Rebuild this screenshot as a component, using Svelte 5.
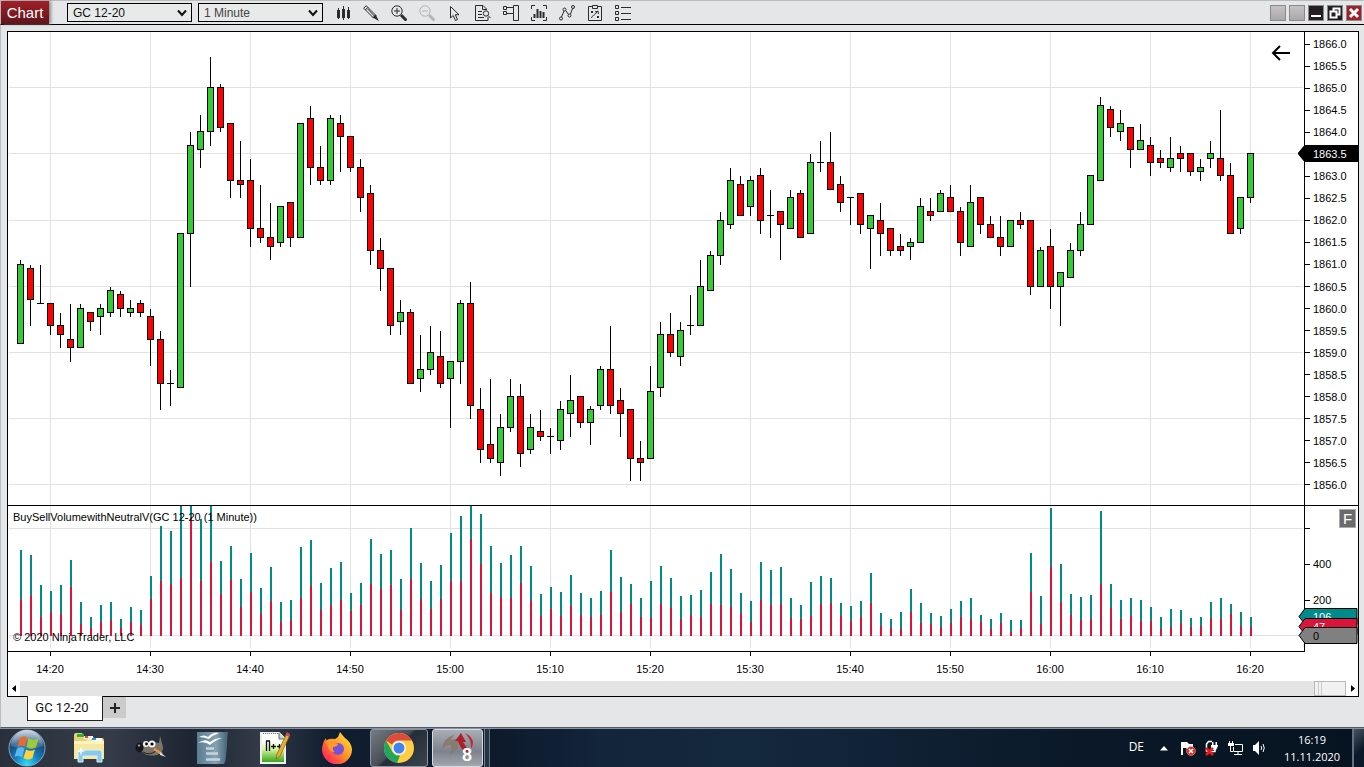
<script>
  // Candles: [high, body top, body bottom, low, kind], one per minute from 14:17.
  const candles = [
    [260,264,344,344,'g'],[265,268,300,326,'r'],[265,303,304,304,'d'],[303,303,326,335,'r'],[313,325,335,348,'r'],[304,339,348,362,'r'],
    [304,308,348,348,'g'],[312,312,322,331,'r'],[304,308,317,335,'g'],[287,290,313,317,'g'],[291,294,309,317,'r'],[300,308,313,317,'g'],
    [300,303,313,317,'r'],[309,316,340,366,'r'],[331,339,384,410,'r'],[370,383,384,406,'d'],[233,233,388,388,'g'],[132,145,234,287,'g'],
    [115,131,150,168,'g'],[57,87,132,146,'g'],[84,87,128,132,'r'],[123,123,181,198,'r'],[141,180,185,198,'r'],[159,180,229,247,'r'],
    [185,228,238,243,'r'],[203,237,247,260,'r'],[206,206,243,247,'g'],[202,202,238,247,'r'],[123,123,238,238,'g'],[106,118,168,185,'r'],
    [146,167,181,185,'r'],[115,118,181,185,'g'],[115,123,137,172,'r'],[136,136,168,172,'r'],[159,167,198,212,'r'],[185,193,251,265,'r'],
    [238,250,269,291,'r'],[268,268,326,335,'r'],[300,312,322,335,'g'],[309,312,384,384,'r'],[335,369,379,392,'g'],[326,352,370,375,'g'],
    [331,356,384,388,'r'],[361,361,379,428,'g'],[300,303,362,384,'g'],[282,303,406,419,'r'],[388,409,450,463,'r'],[379,444,459,463,'r'],
    [414,427,463,476,'g'],[379,396,428,432,'g'],[384,396,454,467,'r'],[414,427,450,454,'g'],[410,431,437,441,'r'],[428,436,437,454,'d'],
    [401,409,441,450,'g'],[375,400,414,437,'g'],[396,396,423,428,'r'],[406,409,423,445,'g'],[366,369,406,410,'g'],[326,369,406,414,'r'],
    [388,400,414,437,'r'],[409,409,459,481,'r'],[441,458,463,481,'r'],[366,391,459,459,'g'],[322,334,388,397,'g'],[313,334,353,357,'r'],
    [322,330,357,366,'g'],[295,325,326,335,'d'],[260,286,326,326,'g'],[251,255,291,291,'g'],[212,220,256,265,'g'],[168,180,225,229,'g'],
    [176,184,216,216,'r'],[176,180,207,216,'g'],[168,175,221,234,'r'],[190,215,216,238,'d'],[211,211,225,260,'r'],[190,197,229,229,'g'],
    [190,193,238,238,'r'],[154,162,234,234,'g'],[141,162,163,172,'d'],[132,162,190,190,'r'],[176,184,203,212,'r'],[197,197,198,225,'d'],
    [193,193,225,234,'r'],[215,215,229,269,'g'],[203,220,234,256,'r'],[228,228,251,256,'r'],[234,246,251,256,'r'],[238,242,247,260,'g'],
    [198,206,243,243,'g'],[198,211,216,221,'r'],[190,193,212,212,'g'],[185,197,212,212,'r'],[207,211,243,256,'r'],[185,202,247,247,'g'],
    [197,197,225,234,'r'],[216,224,238,238,'r'],[216,237,247,256,'r'],[220,220,247,247,'g'],[212,220,225,229,'r'],[220,220,287,295,'r'],
    [247,250,287,287,'g'],[229,246,287,309,'r'],[272,272,287,326,'g'],[243,250,278,278,'g'],[212,224,251,256,'g'],[175,175,225,225,'g'],
    [97,105,181,181,'g'],[106,109,128,137,'r'],[110,123,132,141,'g'],[127,127,150,168,'r'],[124,140,150,150,'g'],[137,145,163,176,'r'],
    [150,158,163,168,'r'],[137,158,168,172,'g'],[146,153,159,172,'r'],[153,153,172,176,'r'],[159,167,172,181,'g'],[141,153,159,168,'g'],
    [110,158,176,181,'r'],[163,175,234,234,'r'],[197,197,229,234,'g'],[153,153,198,203,'g']
  ];

  // Volume bars: [top of the buy part, top of the sell part].
  const volumes = [
    [50,100],[55,96],[85,117],[91,112],[85,114],[60,87],[102,124],[117,128],[105,122],[102,120],[119,128],[107,122],[110,125],[76,99],
    [26,81],[31,84],[6,78],[6,18],[19,81],[6,62],[61,94],[46,80],[79,107],[53,92],[88,114],[67,101],[102,122],[100,120],[47,98],[40,86],
    [83,110],[68,105],[62,100],[93,111],[83,105],[39,84],[54,89],[50,85],[79,110],[28,79],[63,99],[81,109],[65,99],[33,81],[16,81],[6,39],
    [14,64],[46,93],[63,97],[55,98],[46,83],[66,101],[94,116],[87,109],[92,116],[75,106],[93,115],[98,117],[91,115],[50,92],[77,112],[84,104],
    [98,117],[81,118],[66,104],[78,108],[96,119],[95,115],[90,117],[72,104],[54,105],[69,107],[93,113],[101,122],[62,100],[70,105],[67,104],
    [98,118],[105,119],[82,116],[76,104],[78,103],[103,116],[106,121],[101,117],[73,103],[113,126],[119,128],[112,129],[89,112],[103,123],
    [113,124],[116,127],[109,123],[101,117],[98,119],[115,122],[119,129],[113,123],[120,132],[120,128],[53,92],[96,124],[8,67],[64,102],
    [94,115],[97,120],[95,119],[11,84],[84,108],[100,119],[98,116],[100,121],[107,121],[117,129],[109,127],[110,123],[118,127],[117,126],
    [102,118],[98,119],[104,114],[112,126],[117,127]
  ];

  const fill = { g: '#33cc33', r: '#ff0000', d: '#000' };
  const prices = Array.from({ length: 21 }, (_, i) => (1866 - i * 0.5).toFixed(1));
  const times = ['14:20','14:30','14:40','14:50','15:00','15:10','15:20','15:30','15:40','15:50','16:00','16:10','16:20'];
  const columns = times.map((_, i) => 42 + i * 100);
  const barX = (i) => 12 + i * 10;
</script>

<div class="app">
  <header class="toolbar">
    <h1>Chart</h1>
    <div class="picks">
      <label class="pick">
        <select aria-label="Instrument"><option>GC 12-20</option></select>
        <svg width="10" height="8" viewBox="0 0 10 8"><path d="M1 1.5L5 6L9 1.5" /></svg>
      </label>
      <label class="pick muted">
        <select aria-label="Interval"><option>1 Minute</option></select>
        <svg width="10" height="8" viewBox="0 0 10 8"><path d="M1 1.5L5 6L9 1.5" /></svg>
      </label>
    </div>
    <nav class="tools">
      <button aria-label="Chart style">
        <svg viewBox="0 0 16 16"><path d="M3.500 3V14M8.500 1V15M13.500 2V14" /><path class="solid" d="M2 5h3v8H2zM7 4h3v9H7zM12 5h3v8h-3z" /></svg>
      </button>
      <button aria-label="Drawing tools">
        <svg viewBox="0 0 16 16"><path d="M.700 3.200L3.200 .700L13 10.500L10.500 13ZM2.300 5L5 2.300M4.500 3.800L11.800 11.500" /><path class="solid" d="M9.500 12.500L12.500 9.500L16 16Z" /></svg>
      </button>
      <button aria-label="Zoom in">
        <svg viewBox="0 0 16 16"><circle cx="6" cy="6" r="5.200" /><path d="M6 3V9M3 6H9" /><path class="thick" d="M10 10L15.500 15.500" /></svg>
      </button>
      <button aria-label="Zoom out" class="off">
        <svg viewBox="0 0 16 16"><circle cx="6" cy="6" r="5.200" /><path d="M3 6H9" /><path class="thick" d="M10 10L15.500 15.500" /></svg>
      </button>
      <button aria-label="Cursor">
        <svg viewBox="0 0 16 16"><path d="M3.500 1.500V13L6.200 10.500L8.500 15.500L10.500 14.500L8.300 9.700H12Z" /></svg>
      </button>
      <button aria-label="Data box">
        <svg viewBox="0 0 16 16"><path d="M10.500 15.500H.500V.500H8L11.500 4V5M7.500 .500V4.500H11M3 6.500H7M3 9.500H7M3 12.500H9M13 12V15.500H10" /><circle cx="11" cy="8.500" r="2.700" /><path d="M13 10.500L15.500 13" /></svg>
      </button>
      <button aria-label="Chart trader">
        <svg viewBox="0 0 16 16"><path d="M.500 1.500H3.500V4.500H.500ZM.500 6.500H3.500V9.500H.500ZM4 2.500H10M4 8.500H10M10.500 .500H15.500V15.500H10.500Z" /></svg>
      </button>
      <button aria-label="Data series">
        <svg viewBox="0 0 16 16"><path d="M4 .500H.500V4M12 .500H15.500V4M.500 12V15.500H4M15.500 12V15.500H12" /><path class="solid" d="M2.500 9h2v4h-2zM5.500 4h2v9h-2zM8.500 6h2v7h-2zM11.500 7h2v6h-2z" /></svg>
      </button>
      <button aria-label="Indicators">
        <svg viewBox="0 0 16 16"><path d="M2.500 12L5 6M7 6L9.500 9.500M11.500 9L13.500 3.500" /><circle cx="2" cy="13.500" r="1.500" /><circle cx="5.500" cy="4.500" r="1.500" /><circle cx="10.500" cy="10.500" r="1.500" /><circle cx="14" cy="2" r="1.500" /></svg>
      </button>
      <button aria-label="Strategies">
        <svg viewBox="0 0 16 16"><path d="M5 1.500H1.500V15.500H14.500V1.500H11M5.500 .500H10.500V3.500H5.500ZM4 6L6 8M6 6L4 8M10 11L12 13M12 11L10 13M4.500 13C5 10 8 11 10 6.500M8 7L11 6L11.500 9" /></svg>
      </button>
      <button aria-label="Properties">
        <svg viewBox="0 0 16 16"><path d="M.500 .500H3.500V3.500H.500ZM.500 6.500H3.500V9.500H.500ZM.500 12.500H3.500V15.500H.500ZM6 2.500H16M6 8.500H16M6 14.500H16" /></svg>
      </button>
    </nav>
    <div class="window-buttons">
      <button aria-label="Link instrument"></button>
      <button aria-label="Link interval"></button>
      <button class="dark" aria-label="Minimize"><svg viewBox="0 0 14 14"><path d="M2 10H12" stroke-width="2" /></svg></button>
      <button class="dark" aria-label="Restore"><svg viewBox="0 0 14 14"><path d="M5.500 5V2.500H11.500V8.500H9M2.500 5.500H8.500V11.500H2.500Z" stroke-width="2" /></svg></button>
      <button class="close" aria-label="Close"><svg viewBox="0 0 14 14"><path d="M3 3L11 11M11 3L3 11" stroke-width="3" /></svg></button>
    </div>
  </header>

  <main>
    <section class="frame">
      <div class="pane price">
        <div class="plot">
          <svg viewBox="0 0 1296 473" preserveAspectRatio="none" shape-rendering="crispEdges">
            {#each [87, 153, 220, 286, 352, 418, 484] as y}
              <rect x="1" y={y - 32} width="1294" height="1" fill="#e2e2e2" />
            {/each}
            {#each columns as x}
              <rect {x} y="0" width="1" height="473" fill="#e2e2e2" />
            {/each}
            {#each candles as [high, top, bottom, low, kind], i}
              <rect x={barX(i)} y={high - 32} width="1" height={low - high} />
              <rect x={barX(i) - 3} y={top - 32} width="7" height={bottom - top} />
              {#if kind !== 'd'}
                <rect x={barX(i) - 2} y={top - 31} width="5" height={bottom - top - 2} fill={fill[kind]} />
              {/if}
            {/each}
          </svg>
          <button class="back" aria-label="Scroll to last bar">
            <svg width="20" height="16" viewBox="0 0 20 16"><path d="M19 8H2.500M9 1L2 8L9 15" fill="none" stroke="#000" stroke-width="2" /></svg>
          </button>
        </div>
        <ol class="scale">
          {#each prices as p}<li>{p}</li>{/each}
        </ol>
        <div class="marker last"><svg viewBox="0 0 60 17" preserveAspectRatio="none"><path d="M0 8.500L7 0H60V17H7Z" /></svg><span>1863.5</span></div>
      </div>

      <div class="pane volume">
        <div class="plot">
          <svg viewBox="0 0 1296 145" preserveAspectRatio="none" shape-rendering="crispEdges">
            <rect x="1" y="22" width="1294" height="1" fill="#e2e2e2" />
            <rect x="1" y="129" width="1294" height="1" fill="#e2e2e2" />
            {#each columns as x}
              <rect {x} y="0" width="1" height="142" fill="#e2e2e2" />
            {/each}
            {#each volumes as [buy, sell], i}
              <rect x={barX(i)} y={buy - 6} width="2" height={sell - buy} fill="#008b8b" />
              <rect x={barX(i)} y={sell - 6} width="2" height={136 - sell} fill="#dc143c" />
            {/each}
          </svg>
          <p class="caption">BuySellVolumewithNeutralV(GC 12-20 (1 Minute))</p>
          <p class="copyright">© 2020 NinjaTrader, LLC</p>
        </div>
        <ol class="scale">
          <li></li><li>400</li><li>200</li>
        </ol>
        <button class="fixed">F</button>
        <div class="marker buy"><svg viewBox="0 0 60 17" preserveAspectRatio="none"><path d="M1 8.500L7 .500H59V16.500H7Z" /></svg><span>106</span></div>
        <div class="marker sell"><svg viewBox="0 0 60 17" preserveAspectRatio="none"><path d="M1 8.500L7 .500H59V16.500H7Z" /></svg><span>47</span></div>
        <div class="marker neutral"><svg viewBox="0 0 60 17" preserveAspectRatio="none"><path d="M1 8.500L7 .500H59V16.500H7Z" /></svg><span>0</span></div>
      </div>

      <ol class="times">
        {#each times as t}<li>{t}</li>{/each}
      </ol>

      <div class="scrollbar">
        <button aria-label="Scroll left"><svg width="5" height="7" viewBox="0 0 5 7"><path d="M4 0V7L0 3.500Z" /></svg></button>
        <span class="track"><i class="thumb"></i></span>
        <button aria-label="Scroll right"><svg width="5" height="7" viewBox="0 0 5 7"><path d="M1 0V7L5 3.500Z" /></svg></button>
      </div>
    </section>

    <nav class="tabs">
      <button class="tab">GC 12-20</button>
      <button class="add" aria-label="Add tab"><svg width="10" height="10" viewBox="0 0 10 10"><path d="M5 0V10M0 5H10" stroke="#222" stroke-width="2" /></svg></button>
    </nav>
  </main>

  <footer class="taskbar">
    <button class="start" aria-label="Start">
      <svg width="38" height="38" viewBox="0 0 38 38">
        <defs>
          <radialGradient id="orb" cx=".5" cy=".95" r=".95"><stop offset="0" stop-color="#2fe0ff" /><stop offset=".35" stop-color="#1583c0" /><stop offset=".7" stop-color="#174a78" /><stop offset="1" stop-color="#7f9eb8" /></radialGradient>
          <linearGradient id="gloss" x2="0" y2="1"><stop offset="0" stop-color="#fff" stop-opacity=".6" /><stop offset="1" stop-color="#fff" stop-opacity=".1" /></linearGradient>
        </defs>
        <circle cx="19" cy="19" r="18" fill="url(#orb)" stroke="#9db9cc" stroke-opacity=".8" />
        <path d="M3 17A16 16 0 0 1 35 17Q19 23 3 17Z" fill="url(#gloss)" />
        <path d="M12 9Q16 6 19 8.500L17 17.500Q13 15.500 9.500 18Z" fill="#ed6a2d" />
        <path d="M20.500 9Q25 12 30.500 9.500L28 18.500Q23 21 18.500 18Z" fill="#9acb3c" />
        <path d="M9 19.500Q13 17 16.500 19.500L14 28.500Q10 26 6.500 28Z" fill="#5cb6f0" />
        <path d="M18 20.500Q22 23 27 20.500L24.500 29Q20 32 15.500 29Z" fill="#ffd23e" />
      </svg>
    </button>
    <button class="task" aria-label="Explorer">
      <svg width="34" height="32" viewBox="0 0 34 32">
        <path d="M2 27V3Q2 1 4 1H10L12 4H20L22 6H30Q32 6 32 9V27Z" fill="#e8cf77" />
        <path d="M5 2h7v3H5z" fill="#23b53b" /><path d="M12 4h9v3h-9z" fill="#f4f4ee" /><path d="M13 4h3v2h-3z" fill="#e0462c" /><path d="M20 6h10v3H20z" fill="#fff" /><path d="M20 6h4v2h-4z" fill="#2d92dd" />
        <path d="M2 9H14L16 7H19L20 9H32V27H2Z" fill="#f8e79f" /><path d="M2 9H32V12H2Z" fill="#fff4bd" />
        <path d="M6 30V21Q6 18 9 18H27Q30 18 30 21V30H25V24H11V30Z" fill="#8cc9e8" stroke="#d7f1fd" />
        <path d="M9 14L10 18L14 19L10 20L9 24L8 20L4 19L8 18Z" fill="#fff" opacity=".8" />
      </svg>
    </button>
    <button class="task" aria-label="GIMP">
      <svg width="32" height="26" viewBox="0 0 32 26">
        <path d="M4 11Q8 8 10 9Q17 6 24 8L25 1L28 12Q29 17 22 20Q12 22 7 17Z" fill="#7b7468" />
        <ellipse cx="4.500" cy="12.500" rx="4" ry="5" fill="#181818" /><ellipse cx="4" cy="10.500" rx="1.200" ry="1" fill="#aaa" />
        <circle cx="11" cy="9" r="3" fill="#f5f5f5" /><circle cx="17" cy="9" r="3.500" fill="#f5f5f5" /><circle cx="11.500" cy="9" r="1.400" /><circle cx="17" cy="9" r="1.600" />
        <path d="M8 17Q14 21 21 16" fill="none" stroke="#222" /><path d="M19 14L27 19" stroke="#e69a45" stroke-width="2.500" /><path d="M25 17L31 22L25 20Z" fill="#ddd" />
      </svg>
    </button>
    <button class="task" aria-label="OpenOffice">
      <svg width="34" height="34" viewBox="0 0 34 34">
        <defs><linearGradient id="doc"><stop offset="0" stop-color="#5b7c92" /><stop offset=".6" stop-color="#86a2b3" /><stop offset="1" stop-color="#426176" /></linearGradient></defs>
        <path d="M1 1H32Q31 8 31 15L30 25Q30 30 28 33H1Z" fill="url(#doc)" />
        <path d="M3 6Q8 3 12 6Q17 1 23 2Q17 4 13 8Q8 6 3 6ZM2 12Q9 7 14 11Q19 7 26 7Q18 10 14 14Q9 10 2 12Z" fill="#fff" />
        <path d="M10 17.500H18M10 22.500H22M10 28.500H24" stroke="#c5d4dd" stroke-width="2.500" />
      </svg>
    </button>
    <button class="task" aria-label="Notepad++">
      <svg width="32" height="34" viewBox="0 0 32 34">
        <defs><linearGradient id="page" x2="0" y2="1"><stop offset=".3" stop-color="#fff" /><stop offset=".55" stop-color="#d2f29c" /><stop offset="1" stop-color="#2f9f0e" /></linearGradient></defs>
        <path d="M2 2H20L26 8V32H2Z" fill="url(#page)" stroke="#eee" stroke-width="2" /><path d="M20 2V8H26" fill="#ccc" stroke="#666" />
        <path d="M4 2.500H20" stroke="#777" stroke-dasharray="1 1" /><path d="M7.500 20V10H10.500V20M12 15.500H17M14.500 13V18M18 15.500H23M20.500 13V18" fill="none" stroke="#111" stroke-width="1.300" />
        <path d="M28 2L31 4L21 25L17 28L18 23Z" fill="#e9b22e" stroke="#8a5a19" stroke-width=".7" /><path d="M28 1L31 3L30 6L26.500 4Z" fill="#c0524d" />
      </svg>
    </button>
    <button class="task" aria-label="Firefox">
      <svg width="32" height="32" viewBox="0 0 32 32">
        <defs><linearGradient id="fox" x1="1" x2="0" y2="1"><stop offset="0" stop-color="#fff14b" /><stop offset=".45" stop-color="#ff9824" /><stop offset=".8" stop-color="#ff3750" /><stop offset="1" stop-color="#d81a79" /></linearGradient></defs>
        <path d="M19 0Q22 4 24 6Q30 10 31 17A15 15 0 1 1 2 12Q3 8 5 6Q5 9 7 9Q9 6 14 7L17 5Z" fill="url(#fox)" />
        <circle cx="17" cy="17" r="6" fill="#7750dc" /><path d="M5 9Q9 5 14 8L13 11Q17 11 17 13Q15 15 12 15Q11 18 14 20Q8 20 7 15Z" fill="#ff9a28" />
      </svg>
    </button>
    <button class="task running" aria-label="Chrome">
      <svg width="32" height="32" viewBox="0 0 32 32">
        <circle cx="16" cy="16" r="15" fill="#ffcd41" />
        <path d="M16 1A15 15 0 0 1 29 8.500H16A7.500 7.500 0 0 0 9 12.500L3 8.500A15 15 0 0 1 16 1Z" fill="#dd4b3e" />
        <path d="M3 8.500L9.500 20A7.500 7.500 0 0 0 17 23.500L14 31A15 15 0 0 1 3 8.500Z" fill="#22a55d" />
        <circle cx="16" cy="16" r="7" fill="#f6f6f6" /><circle cx="16" cy="16" r="5.500" fill="#4284ed" />
      </svg>
    </button>
    <button class="task running active" aria-label="NinjaTrader 8">
      <svg width="34" height="34" viewBox="0 0 34 34">
        <path d="M1 18Q2 7 13 4L9 10Q14 6 18 10L17 17L9 24Q12 16 9 14Q5 14 1 18Z" fill="#897b71" />
        <path d="M14 10L20 2L25 11H22L29 22Q22 21 19 15L17 10Z" fill="#ae2028" />
        <path d="M24 2Q36 8 30 18Q31 9 24 2Z" fill="#c0282f" />
        <text x="21" y="30" font-size="18" font-weight="bold" fill="#fff">8</text>
      </svg>
    </button>
    <span class="stack"></span>
    <div class="tray">
      <span class="lang">DE</span>
      <button aria-label="Show hidden icons"><svg width="8" height="5" viewBox="0 0 8 5"><path d="M0 4.500L4 0L8 4.500Z" fill="#fff" /></svg></button>
      <button aria-label="Action center"><svg width="16" height="16" viewBox="0 0 16 16"><path d="M2 15V2" stroke="#fff" stroke-width="2" /><path d="M3 2H7L9 4H13V10H8L6 8H3Z" fill="#fff" /><circle cx="11" cy="11" r="4.500" fill="#d92f24" stroke="#f2a097" stroke-width=".5" /><path d="M9 9L13 13M13 9L9 13" stroke="#fff" stroke-width="1.500" /></svg></button>
      <button aria-label="Power"><svg width="16" height="16" viewBox="0 0 16 16"><path d="M5 11H2.500V4L4.500 1.500H8M11 9V11.500H7" fill="none" stroke="#fff" stroke-width="1.500" /><path d="M7 5H14V6L12 10H9L7 8ZM8 2h1.500v3H8zM11.500 2H13v3h-1.500z" fill="#fff" /><path d="M2 8L9 15M9 8L2 15" stroke="#f01818" stroke-width="2.500" /></svg></button>
      <button aria-label="Network"><svg width="16" height="16" viewBox="0 0 16 16"><path d="M7 4.500H14.500V11.500H5.500V7M6 14.500H14M10 12V14M2.500 6V11.500H5M1.500 1V4M4.500 1V4" fill="none" stroke="#fff" /><path d="M0 3h6v3H0z" fill="#fff" /></svg></button>
      <button aria-label="Volume"><svg width="16" height="16" viewBox="0 0 16 16"><path d="M1 5H3L7 1V15L3 11H1Z" fill="#fff" /><path d="M9 6Q10.500 8 9 10M11 4Q13.500 8 11 12" fill="none" stroke="#fff" /></svg></button>
      <time class="clock"><span>16:19</span><span>11.11.2020</span></time>
      <button class="desktop" aria-label="Show desktop"></button>
    </div>
  </footer>
</div>

<style>
  :global(body) { background: #e5e6e8; }
  .app { min-height: 100vh; display: flex; flex-direction: column; box-sizing: border-box; font: 11px/14px "Liberation Sans", Arial, sans-serif; color: #000; }
  button { border: 0; padding: 0; margin: 0; background: none; font: inherit; color: inherit; display: flex; align-items: center; justify-content: center; box-sizing: border-box; }
  ol { list-style: none; margin: 0; padding: 0; }
  h1, p { margin: 0; }

  .toolbar { height: 25px; box-sizing: border-box; border-top: 1px solid #bcbcbe; border-bottom: 1px solid #000; border-left: 1px solid #bcbcbe; display: flex; align-items: center; background: #e5e6e8; }
  h1 { width: 48px; height: 23px; font-size: 15px; line-height: 23px; font-weight: 400; text-align: center; color: #fff; background: linear-gradient(#a01f28, #5f151b); box-shadow: 2px 0 3px #888; }
  .picks { display: flex; gap: 6px; margin: 0 6px 0 18px; }
  .pick { display: flex; position: relative; }
  .pick select { appearance: none; width: 125px; height: 19px; border: 1px solid #000; border-radius: 0; background: #e8e9e9; padding: 1px 5px 0; font: 12px/16px "Liberation Sans", Arial, sans-serif; color: #111; }
  .pick.muted select { color: #444; }
  .pick svg { position: absolute; right: 5px; top: 6px; fill: none; stroke: #111; stroke-width: 2; pointer-events: none; }
  .tools { display: flex; flex: 1; }
  .tools button { width: 28px; height: 20px; }
  .tools svg { width: 16px; height: 16px; fill: none; stroke: #2b2b2d; stroke-width: 1; }
  .tools .solid { fill: #2b2b2d; stroke: none; }
  .tools .thick { stroke-width: 3; }
  .tools .off svg { stroke: #b4b4b6; }
  .window-buttons { display: flex; gap: 3px; margin-right: 2px; }
  .window-buttons button { width: 16px; height: 16px; border: 1px solid #8a8a8a; background: linear-gradient(#c4c2c3, #aaa8a9); }
  .window-buttons .dark { background: #231f20; }
  .window-buttons .close { background: #a01f28; }
  .window-buttons svg { width: 14px; height: 14px; flex: none; fill: none; stroke: #fff; }

  main { flex: 1; display: flex; flex-direction: column; padding: 6px 5px 0 6px; border-left: 1px solid #bcbcbe; border-bottom: 1px solid #55585e; }
  .frame { flex: 1; display: flex; flex-direction: column; border: 1px solid #000; background: #fff; }
  .pane { display: flex; position: relative; }
  .pane.price { flex: 1; border-bottom: 1px solid #000; }
  .pane.volume { height: 145px; }
  .plot { flex: 1; position: relative; min-height: 0; }
  .plot > svg { position: absolute; inset: 0; width: 100%; height: 100%; }
  .back { position: absolute; right: 13px; top: 13px; }
  .scale { width: 53px; border-left: 1px solid #000; display: flex; flex-direction: column; padding-top: 1px; padding-bottom: 9px; }
  .scale li { flex: 1 1 14px; display: flex; align-items: center; gap: 3px; }
  .scale li::before { content: ""; width: 5px; height: 1px; background: #000; }
  .volume .scale { padding-top: 4px; padding-bottom: 33px; }
  .caption, .copyright { position: absolute; left: 5px; }
  .caption { top: 4px; }
  .copyright { bottom: 7px; }
  .marker { position: absolute; right: 0; width: 60px; height: 17px; }
  .marker svg { position: absolute; width: 100%; height: 100%; stroke: #000; }
  .marker span { position: absolute; left: 15px; top: 2px; color: #fff; }
  .last { top: 113px; }
  .buy { bottom: 26px; fill: #008b8b; }
  .sell { bottom: 16px; fill: #dc143c; }
  .neutral { bottom: 7px; fill: #808080; }
  .neutral span { color: #000; }
  .fixed { position: absolute; right: 2px; top: 3px; width: 17px; height: 19px; border: 1px solid #aaa; background: #6b6b6b; color: #fff; font-size: 15px; }
  .times { display: grid; grid-template-columns: repeat(13, 1fr); height: 30px; margin: 0 54px 0 -8px; padding-right: 4px; position: relative; }
  .times::before { content: ""; position: absolute; left: 8px; right: -1px; top: 0; height: 1px; background: #000; }
  .times li { display: flex; flex-direction: column; align-items: center; gap: 6px; white-space: nowrap; }
  .times li::before { content: ""; width: 1px; height: 5px; background: #000; }
  .scrollbar { display: flex; height: 15px; }
  .scrollbar button { width: 12px; background: #fff; }
  .track { flex: 1; background: #e4e4e4; display: flex; justify-content: flex-end; }
  .thumb { width: 32px; box-sizing: border-box; border: 1px solid #b8b8b8; background: linear-gradient(90deg, transparent 3px, #ccc 3px 4px, transparent 4px 6px, #ccc 6px 7px, transparent 7px) #f1f1f1; }
  .tabs { display: flex; align-items: flex-start; height: 30px; padding-left: 20px; }
  .tab { width: 76px; height: 25px; margin-top: -1px; border: 1px solid #222; border-top: 0; background: #fff; position: relative; font: 400 13px/20px Roboto, sans-serif; color: #111; padding-right: 6px; }
  .add { width: 23px; height: 21px; background: #cbcbcb; }

  .taskbar { height: 39px; box-sizing: border-box; border-top: 1px solid #8492a3; display: flex; color: #fff; background: linear-gradient(90deg, #2a303b 0, #353b48 110px, #1d2533 190px, #323947 260px, #111e30 330px, #0d1a2c 490px, transparent 600px), linear-gradient(90deg, #0d1a2c, #14283e 55%, #0a1827 80%, #061321); }
  .start { width: 54px; margin-right: 4px; }
  .task { width: 62px; }
  .running { width: 58px; margin: 0 2px; border: 1px solid #8d949e; border-radius: 3px; background: linear-gradient(135deg, #777c84 0, #474d57 45%, #242c38 50%, #3c4450); }
  .active { width: 51px; border-color: #d7dce2; background: linear-gradient(#a9adb5, #7d828c 60%, #a3a7ae); }
  .stack { width: 6px; margin-left: -1px; border-left: 1px solid #76808c; border-right: 1px solid #66717e; box-sizing: border-box; background: #263342; }
  .tray { margin-left: auto; display: flex; align-items: center; font: 12px/17px "Open Sans", "Noto Sans", sans-serif; }
  .tray button { width: 16px; margin-right: 8px; }
  .lang { margin-right: 12px; margin-bottom: 4px; }
  .clock { display: flex; flex-direction: column; text-align: center; width: 64px; margin-left: 4px; margin-right: 8px; font-size: 11px; }
  .tray .desktop { width: 12px; height: 38px; margin: 0; border-left: 2px solid #607080; background: linear-gradient(135deg, #46525e, #0a1827 60%); }
</style>
